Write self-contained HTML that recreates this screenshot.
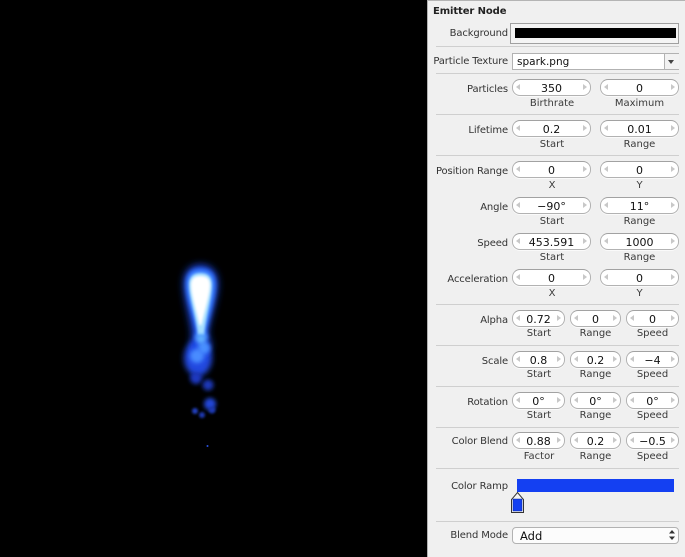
<!DOCTYPE html>
<html><head><meta charset="utf-8"><style>
html,body{margin:0;padding:0;background:#000}
body{width:685px;height:557px;position:relative;overflow:hidden;font-family:"DejaVu Sans",sans-serif;font-size:10px;color:#333}
#p{position:absolute;left:427px;top:0;width:258px;height:557px;background:#f0f0f0;border-left:1px solid #b0b0b0;box-sizing:border-box;border-top:1px solid #b4b4b4}
#m{position:absolute;inset:0;overflow:visible}
.hr{position:absolute;left:436px;width:243px;height:1px;background:#cfcfcf}
.l{position:absolute;left:428px;width:80px;text-align:right;height:14px;line-height:14px;white-space:nowrap;letter-spacing:-.13px;margin-top:2px}
.s{position:absolute;height:15px;line-height:17px;border:1px solid #b2b2b2;border-top-color:#a2a2a2;border-radius:8px;background:#fff;text-align:center;font-size:11px;color:#111;box-shadow:0 1px 0 #fafafa}
.s:before,.s:after{content:"";position:absolute;top:4px;border:3.5px solid transparent}
.s:before{left:3px;border-left:0;border-right:4px solid #c8c8c8}
.s:after{right:3px;border-right:0;border-left:4px solid #c8c8c8}
.a{left:512px;width:77px}.b{left:600px;width:77px}
.c{left:512px;width:51px}.d{left:570px;width:49px}.e{left:626px;width:51px}
.u{position:absolute;text-align:center;height:13px;line-height:13px;color:#3a3a3a;margin-top:2px}
.ua{left:513px;width:78px}.ub{left:600px;width:79px}
.uc{left:513px;width:52px}.ud{left:570px;width:51px}.ue{left:626px;width:53px}
</style></head><body>
<svg width="427" height="557" style="position:absolute;left:0;top:0" xmlns="http://www.w3.org/2000/svg">
<defs>
<filter id="b8" x="-100%" y="-100%" width="300%" height="300%"><feGaussianBlur stdDeviation="4"/></filter>
<filter id="b4" x="-100%" y="-100%" width="300%" height="300%"><feGaussianBlur stdDeviation="3"/></filter>
<filter id="b2" x="-100%" y="-100%" width="300%" height="300%"><feGaussianBlur stdDeviation="2.200"/></filter>
<filter id="b1" x="-100%" y="-100%" width="300%" height="300%"><feGaussianBlur stdDeviation="1.200"/></filter>
</defs>
<rect width="427" height="557" fill="#000"/>
<ellipse cx="198" cy="358" rx="14" ry="18" fill="#2048e0" filter="url(#b4)"/>
<path d="M184 284c0-13 7-19 16.500-19s17 6 17 19c0 14-8 34-10 50l4 12-6 10h-11l-4-10 2-12c-2-16-8.500-36-8.500-50z" fill="#1c48e8" filter="url(#b8)"/>
<path d="M186 285c0-11 5-16 14.500-16s15 5 15 16c0 13-6 30-9 46l2 8h-14l2-8c-3-16-10.500-33-10.500-46z" fill="#3a80ff" filter="url(#b2)"/>
<path d="M189 285c0-8 4-12 11.500-12s11.500 4 11.500 12c0 12-6 32-8 50h-6c-2-18-9-38-9-50z" fill="#a8e0ff" filter="url(#b1)"/>
<path d="M191 285c0-6 3-9 9.500-9s9.500 3 9.500 9c0 10-6 28-8.500 40h-2c-2.500-12-8.500-30-8.500-40z" fill="#fff" filter="url(#b1)"/>
<circle cx="204" cy="348" r="6" fill="#4a90ff" filter="url(#b2)"/>
<circle cx="197" cy="356" r="7" fill="#4a8cff" filter="url(#b2)"/>
<circle cx="201" cy="339" r="5" fill="#60b0ff" filter="url(#b2)"/>
<circle cx="196" cy="378" r="6" fill="#1a38c0" filter="url(#b2)"/>
<circle cx="208" cy="385" r="5.500" fill="#1a38b8" filter="url(#b2)"/>
<circle cx="210" cy="404" r="6" fill="#2046d8" filter="url(#b2)"/>
<circle cx="212" cy="410" r="3.500" fill="#1a38b0" filter="url(#b1)"/>
<circle cx="195" cy="411" r="3" fill="#2040c0" filter="url(#b1)"/>
<circle cx="202" cy="415" r="3" fill="#1c38b0" filter="url(#b1)"/>
<circle cx="207.500" cy="446" r="1" fill="#2a50e0"/>
</svg>
<div id="p"></div>
<div id="m">
<div style="position:absolute;left:433px;top:5px;font-weight:bold;font-size:10px;line-height:14px;color:#222;letter-spacing:-.1px">Emitter Node</div>

<div class="l" style="top:25px">Background</div>
<div style="position:absolute;left:510px;top:23px;width:167px;height:19px;border:1px solid #a0a0a0;background:#f4f4f4"></div>
<div style="position:absolute;left:515px;top:28px;width:161px;height:10px;background:#000"></div>
<div class="hr" style="top:46px"></div>

<div class="l" style="top:53px">Particle Texture</div>
<div style="position:absolute;left:512px;top:53px;width:165px;height:15px;border:1px solid #b2b2b2;background:#fff;font-size:10.500px;line-height:16px;color:#111;text-indent:4px">spark.png</div>
<div style="position:absolute;left:664px;top:54px;width:14px;height:15px;border-left:1px solid #b2b2b2;background:#f2f2f2"></div>
<div style="position:absolute;left:668px;top:60px;border:3.500px solid transparent;border-top:4px solid #444;border-bottom:0"></div>
<div class="hr" style="top:73px"></div>

<div class="l" style="top:81px">Particles</div><div class="s a" style="top:79px">350</div><div class="s b" style="top:79px">0</div>
<div class="u ua" style="top:95px">Birthrate</div><div class="u ub" style="top:95px">Maximum</div>
<div class="hr" style="top:114px"></div>

<div class="l" style="top:122px">Lifetime</div><div class="s a" style="top:120px">0.2</div><div class="s b" style="top:120px">0.01</div>
<div class="u ua" style="top:136px">Start</div><div class="u ub" style="top:136px">Range</div>
<div class="hr" style="top:155px"></div>

<div class="l" style="top:163px">Position Range</div><div class="s a" style="top:161px">0</div><div class="s b" style="top:161px">0</div>
<div class="u ua" style="top:177px">X</div><div class="u ub" style="top:177px">Y</div>

<div class="l" style="top:199px">Angle</div><div class="s a" style="top:197px">−90°</div><div class="s b" style="top:197px">11°</div>
<div class="u ua" style="top:213px">Start</div><div class="u ub" style="top:213px">Range</div>

<div class="l" style="top:235px">Speed</div><div class="s a" style="top:233px">453.591</div><div class="s b" style="top:233px">1000</div>
<div class="u ua" style="top:249px">Start</div><div class="u ub" style="top:249px">Range</div>

<div class="l" style="top:271px">Acceleration</div><div class="s a" style="top:269px">0</div><div class="s b" style="top:269px">0</div>
<div class="u ua" style="top:285px">X</div><div class="u ub" style="top:285px">Y</div>
<div class="hr" style="top:304px"></div>

<div class="l" style="top:312px">Alpha</div><div class="s c" style="top:310px">0.72</div><div class="s d" style="top:310px">0</div><div class="s e" style="top:310px">0</div>
<div class="u uc" style="top:325px">Start</div><div class="u ud" style="top:325px">Range</div><div class="u ue" style="top:325px">Speed</div>
<div class="hr" style="top:345px"></div>

<div class="l" style="top:353px">Scale</div><div class="s c" style="top:351px">0.8</div><div class="s d" style="top:351px">0.2</div><div class="s e" style="top:351px">−4</div>
<div class="u uc" style="top:366px">Start</div><div class="u ud" style="top:366px">Range</div><div class="u ue" style="top:366px">Speed</div>
<div class="hr" style="top:386px"></div>

<div class="l" style="top:394px">Rotation</div><div class="s c" style="top:392px">0°</div><div class="s d" style="top:392px">0°</div><div class="s e" style="top:392px">0°</div>
<div class="u uc" style="top:407px">Start</div><div class="u ud" style="top:407px">Range</div><div class="u ue" style="top:407px">Speed</div>
<div class="hr" style="top:427px"></div>

<div class="l" style="top:433px">Color Blend</div><div class="s c" style="top:432px">0.88</div><div class="s d" style="top:432px">0.2</div><div class="s e" style="top:432px">−0.5</div>
<div class="u uc" style="top:448px">Factor</div><div class="u ud" style="top:448px">Range</div><div class="u ue" style="top:448px">Speed</div>
<div class="hr" style="top:468px"></div>

<div class="l" style="top:478px">Color Ramp</div>
<div style="position:absolute;left:517px;top:479px;width:157px;height:13px;background:#1440f2"></div>
<svg width="16" height="24" style="position:absolute;left:510px;top:491px"><path d="M1.500 21.500V8.500L7.500 1.500L13.500 8.500V21.500Z" fill="#f4f4f4" stroke="#333" stroke-width="1"/><rect x="3" y="8" width="9" height="12" fill="#1440f2" stroke="#0c2a9a" stroke-width=".5"/></svg>
<div class="hr" style="top:521px"></div>

<div class="l" style="top:527px">Blend Mode</div>
<div style="position:absolute;left:512px;top:527px;width:165px;height:15px;border:1px solid #b2b2b2;border-radius:4px;background:#fcfcfc;font-size:11.500px;line-height:16px;color:#111;text-indent:7px">Add</div>
<svg width="8" height="12" style="position:absolute;left:668px;top:529px"><path d="M1 4.500L4 1L7 4.500ZM1 7.500L4 11L7 7.500Z" fill="#333"/></svg>
</div>
</body></html>
